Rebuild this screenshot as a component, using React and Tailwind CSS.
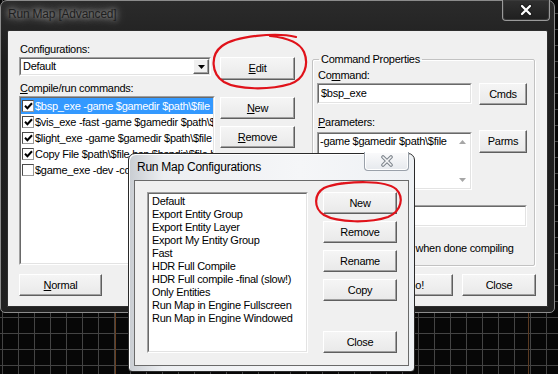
const UI =
  "font-['Liberation_Sans',Arial,sans-serif] text-[11px] leading-[13px] tracking-[-0.28px] text-black";

function Button({ className = "", children }) {
  return (
    <div
      className={`flex items-center justify-center bg-[linear-gradient(#f5f5f5,#e9e9e9)] border border-t-white border-l-white border-r-[#5f5f5f] border-b-[#5f5f5f] shadow-[inset_-1px_-1px_0_#a0a0a0] ${className}`}
    >
      <span>{children}</span>
    </div>
  );
}

function Sunken({ className = "", inner = "", children }) {
  return (
    <div
      className={`border border-t-[#a0a0a0] border-l-[#a0a0a0] border-r-white border-b-white ${className}`}
    >
      <div
        className={`h-full border border-t-[#696969] border-l-[#696969] border-r-[#e3e3e3] border-b-[#e3e3e3] bg-white overflow-hidden ${inner}`}
      >
        {children}
      </div>
    </div>
  );
}

function Check({ checked }) {
  return (
    <span className="w-[12px] h-[12px] shrink-0 flex items-center justify-center bg-white border border-t-[#4a4a4a] border-l-[#4a4a4a] border-r-[#9a9a9a] border-b-[#9a9a9a]">
      {checked && (
        <svg width="9" height="8" viewBox="0 0 9 8">
          <path d="M1 3.8 L3.4 6.2 L8 1.2" stroke="#000" strokeWidth="2" fill="none" />
        </svg>
      )}
    </span>
  );
}

const commands = [
  { on: true, text: "$bsp_exe -game $gamedir $path\\$file" },
  { on: true, text: "$vis_exe -fast -game $gamedir $path\\$file" },
  { on: true, text: "$light_exe -game $gamedir $path\\$file" },
  { on: true, text: "Copy File $path\\$file.bsp $bspdir\\$file.bsp" },
  { on: false, text: "$game_exe -dev -console +map $file" },
];

const configs = [
  "Default",
  "Export Entity Group",
  "Export Entity Layer",
  "Export My Entity Group",
  "Fast",
  "HDR Full Compile",
  "HDR Full compile -final (slow!)",
  "Only Entities",
  "Run Map in Engine Fullscreen",
  "Run Map in Engine Windowed",
];

function RunMapWindow() {
  return (
    <div className="absolute left-0 top-0 w-[555px] h-[313px] rounded-t-[7px] rounded-b-[5px] border border-[#8c8c8c] bg-[linear-gradient(to_bottom,#2b2b2b,#1d1d1d_60px,#202020)] flex flex-col px-[6px] pb-[5px]">
      {/* title bar */}
      <div className="h-[29px] flex items-start">
        <div className="ml-[1px] pt-[6px] font-['Liberation_Sans',Arial,sans-serif] text-[12px] leading-[15px] tracking-[-0.2px] text-[#1e1e1e] [text-shadow:0_0_10px_rgba(255,255,255,0.7),0_0_5px_rgba(255,255,255,0.45)]">
          Run Map [Advanced]
        </div>
        <div className="flex-1" />
        <div className="-mt-[1px] -mr-[2px] w-[48px] h-[21px] rounded-b-[4px] border border-t-0 border-[#9a9a9a] shadow-[inset_0_0_0_1px_#3a3a3a] bg-[linear-gradient(#303030,#1f1f1f)] flex items-center justify-center">
          <svg width="14" height="12" viewBox="0 0 14 12">
            <path d="M3 2 L11 10 M11 2 L3 10" stroke="#1a1a1a" strokeWidth="4.2" strokeLinecap="round" />
            <path d="M3 2 L11 10 M11 2 L3 10" stroke="#fff" strokeWidth="2.3" strokeLinecap="round" />
          </svg>
        </div>
      </div>

      {/* client */}
      <div className={`flex-1 rounded-t-[2px] border border-[#2e2e2e] bg-[#f0f0f0] flex flex-col pl-[11px] pr-[11px] pt-[12px] ${UI}`}>
        <div className="flex items-start">
          {/* configurations + commands */}
          <div className="w-[196px] flex flex-col">
            <div className="h-[13px] ml-[1px]">Configurations:</div>
            <Sunken className="mt-[1px] w-[192px] h-[19px]" inner="flex items-center">
              <span className="ml-[2px] flex-1">Default</span>
              <div className="w-[16px] h-[15px] flex items-center justify-center bg-[#f0f0f0] border border-t-white border-l-white border-r-[#5f5f5f] border-b-[#5f5f5f] shadow-[inset_-1px_-1px_0_#a0a0a0]">
                <svg width="7" height="4" viewBox="0 0 7 4">
                  <path d="M0 0 H7 L3.5 4 Z" fill="#000" />
                </svg>
              </div>
            </Sunken>
            <div className="mt-[6px] h-[13px] ml-[1px]">
              <u>C</u>ompile/run commands:
            </div>
            <Sunken className="mt-[1px] h-[169px]">
              {commands.map((c, i) => (
                <div
                  key={i}
                  className={`h-[16px] flex items-center whitespace-nowrap ${
                    i === 0 ? "bg-[#3399ff] text-white" : ""
                  }`}
                >
                  <span className="ml-[1px]">
                    <Check checked={c.on} />
                  </span>
                  <span className="ml-[1px]">{c.text}</span>
                </div>
              ))}
            </Sunken>
          </div>

          {/* middle buttons */}
          <div className="ml-[5px] w-[75px] flex flex-col pt-[14px]">
            <Button className="h-[23px]">
              <u>E</u>dit
            </Button>
            <Button className="mt-[17px] h-[22px]">
              <u>N</u>ew
            </Button>
            <Button className="mt-[7px] h-[22px]">
              <u>R</u>emove
            </Button>
          </div>

          {/* command properties */}
          <fieldset className="ml-[17px] mt-[10px] w-[223px] h-[213px] border border-[#c2c2c2] rounded-[2px] shadow-[inset_1px_1px_0_#fff,1px_1px_0_#fff] pl-[4px] pr-[7px]">
            <legend className="ml-[2px] px-[2px] h-[13px]">Command Properties</legend>
            <div className="flex flex-col">
              <div className="mt-[3px] h-[13px] ml-[1px]">
                Co<u>m</u>mand:
              </div>
              <div className="mt-[1px] flex items-start">
                <Sunken className="w-[155px] h-[21px]" inner="flex items-center">
                  <span className="ml-[2px]">$bsp_exe</span>
                </Sunken>
                <Button className="ml-[7px] w-[48px] h-[22px]">Cmds</Button>
              </div>
              <div className="mt-[11px] h-[13px] ml-[1px]">
                <u>P</u>arameters:
              </div>
              <div className="mt-[1px] flex items-start">
                <Sunken className="mt-[2px] w-[155px] h-[58px]" inner="flex">
                  <span className="ml-[1px] mt-[1px] flex-1 whitespace-nowrap">
                    {"-game $gamedir $path\\$file"}
                  </span>
                  <div className="w-[16px] flex flex-col items-center justify-between py-[6px]">
                    <svg width="7" height="4" viewBox="0 0 7 4">
                      <path d="M0 4 H7 L3.5 0 Z" fill="#a6a6a6" />
                    </svg>
                    <svg width="7" height="4" viewBox="0 0 7 4">
                      <path d="M0 0 H7 L3.5 4 Z" fill="#a6a6a6" />
                    </svg>
                  </div>
                </Sunken>
                <Button className="ml-[7px] w-[48px] h-[23px]">Parms</Button>
              </div>
              <Sunken className="mt-[15px] w-[210px] h-[22px]" inner="bg-[#f0f0f0]" />
              <div className="mt-[15px] h-[13px] flex items-center">
                <Check checked={false} />
                <span className="ml-[4px] whitespace-nowrap">Wait for keypress when done compiling</span>
              </div>
            </div>
          </fieldset>
        </div>

        {/* bottom buttons */}
        <div className="mt-[8px] flex items-start">
          <Button className="w-[83px] h-[22px]">
            <u>N</u>ormal
          </Button>
          <div className="flex-1" />
          <Button className="w-[75px] h-[22px]">Go!</Button>
          <Button className="ml-[9px] w-[74px] h-[22px]">Close</Button>
        </div>
      </div>
    </div>
  );
}

function ConfigWindow() {
  return (
    <div className="absolute left-[128px] top-[153px] w-[287px] h-[219px] rounded-t-[7px] rounded-b-[4px] border border-[#2a2a2a] bg-[linear-gradient(to_right,#c9cdd2,#eceef1_12%,#f5f6f8_60%,#eef1f4)] shadow-[inset_1px_1px_0_#ffffff] flex flex-col px-[5px] pb-[5px]">
      <div className="h-[26px] flex items-start">
        <div className="ml-[3px] pt-[6px] font-['Liberation_Sans',Arial,sans-serif] text-[12px] leading-[15px] tracking-[-0.25px] text-black">
          Run Map Configurations
        </div>
        <div className="flex-1" />
        <div className="-mt-[2px] w-[45px] h-[19px] rounded-b-[4px] border border-t-0 border-[#9aa1aa] bg-[linear-gradient(#fbfbfc,#e6e9ed)] shadow-[inset_0_0_0_1px_#ffffff] flex items-center justify-center">
          <svg width="14" height="12" viewBox="0 0 14 12">
            <path d="M3 2 L11 10 M11 2 L3 10" stroke="#7d848c" strokeWidth="3.6" strokeLinecap="round" />
            <path d="M3 2 L11 10 M11 2 L3 10" stroke="#f4f5f6" strokeWidth="1.6" strokeLinecap="round" />
          </svg>
        </div>
      </div>
      <div className={`flex-1 border border-[#6a6a6a] bg-[#f0f0f0] flex items-start pl-[12px] pt-[11px] ${UI}`}>
        <Sunken className="w-[161px] h-[161px]" inner="pl-[3px] pt-[1px]">
          {configs.map((c) => (
            <div key={c} className="h-[13px] whitespace-nowrap">
              {c}
            </div>
          ))}
        </Sunken>
        <div className="ml-[15px] w-[74px] flex flex-col">
          <Button className="h-[22px]">New</Button>
          <Button className="mt-[7px] h-[22px]">Remove</Button>
          <Button className="mt-[7px] h-[22px]">Rename</Button>
          <Button className="mt-[7px] h-[22px]">Copy</Button>
          <Button className="mt-[30px] h-[22px]">Close</Button>
        </div>
      </div>
    </div>
  );
}

export default function App() {
  return (
    <div className="relative w-[558px] h-[374px] overflow-hidden bg-[#070707] bg-[linear-gradient(to_right,#444_1px,transparent_1px),linear-gradient(to_bottom,#444_1px,transparent_1px)] bg-[size:16px_16px] bg-[position:2px_13px]">
      <div className="absolute left-[115px] top-0 w-[1px] h-full bg-[#6b3f1e]" />
      <div className="absolute left-[528px] top-0 w-[1px] h-full bg-[#5a3a22]" />
      <RunMapWindow />
      <ConfigWindow />
      <svg className="absolute inset-0 pointer-events-none" width="558" height="374" viewBox="0 0 558 374">
        <path
          d="M296 37 C276 32 236 36 222 46 C210 55 211 74 224 82 C238 90 270 90 290 84 C305 79 309 64 304 52 C300 43 290 38 270 36"
          stroke="#e0121a"
          strokeWidth="2.2"
          fill="none"
          strokeLinecap="round"
        />
        <path
          d="M330 186 C350 181 385 180 396 189 C404 197 402 211 388 217 C370 223 338 223 324 215 C313 208 314 194 324 188 C330 185 338 184 344 183"
          stroke="#e0121a"
          strokeWidth="2.2"
          fill="none"
          strokeLinecap="round"
        />
      </svg>
    </div>
  );
}
